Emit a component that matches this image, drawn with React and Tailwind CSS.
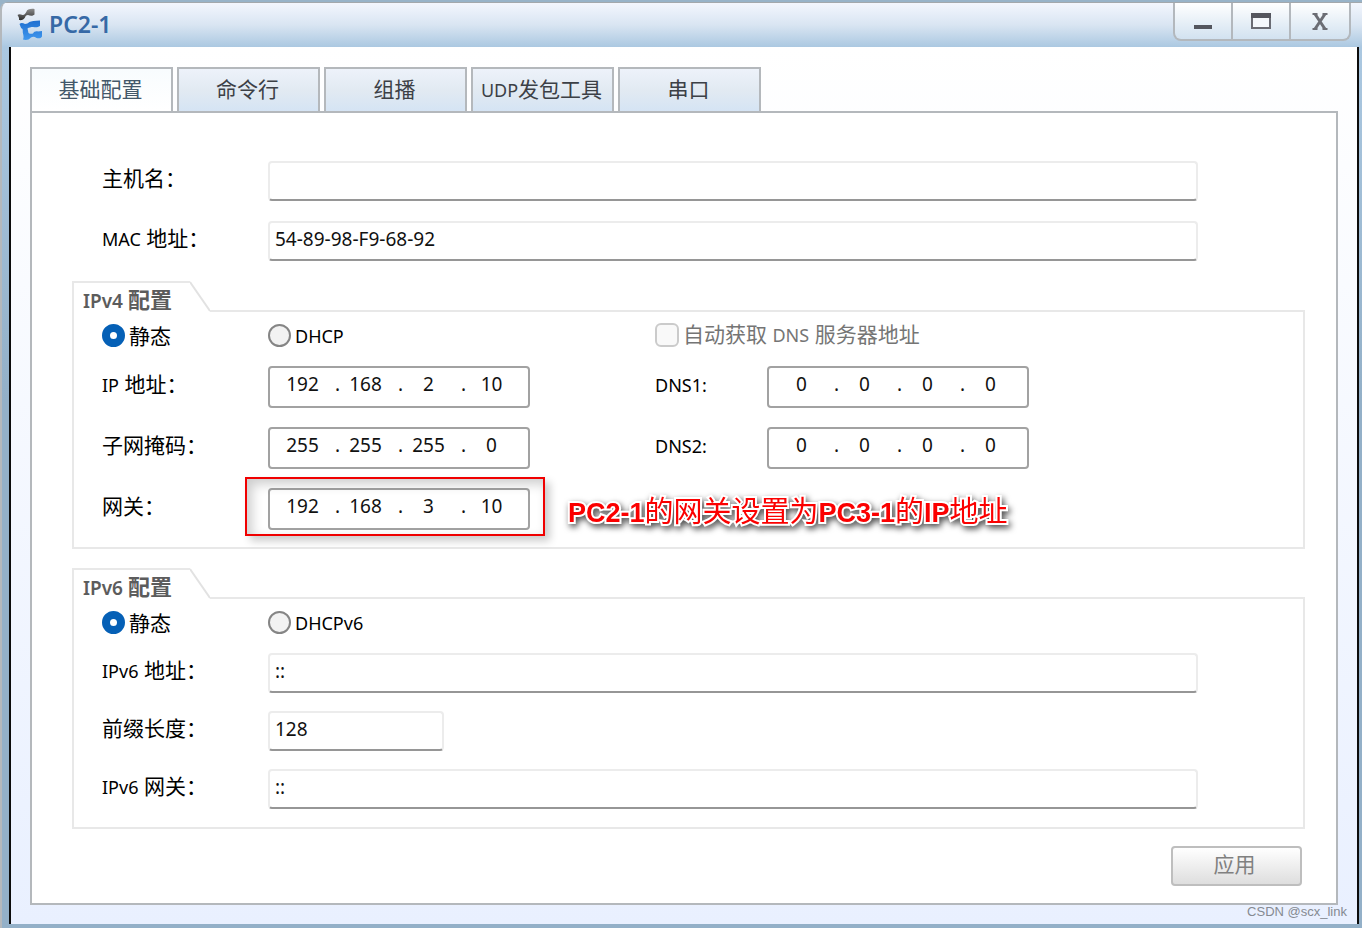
const NOTO = "font-['Noto_Sans','Noto_Sans_CJK_SC',sans-serif]";

const TABS = [
  { cjk: "基础配置" },
  { cjk: "命令行" },
  { cjk: "组播" },
  { latin: "UDP", cjk: "发包工具" },
  { cjk: "串口" },
];

function Logo() {
  return (
    <svg width="26" height="34" viewBox="0 0 26 34" aria-hidden="true">
      <defs>
        <linearGradient id="logo-dark" x1="0" y1="0" x2="0" y2="1">
          <stop offset="0" stopColor="#8b8b8b" />
          <stop offset="1" stopColor="#2e2e2e" />
        </linearGradient>
        <linearGradient id="logo-blue" x1="0" y1="0" x2="0" y2="1">
          <stop offset="0" stopColor="#1f6fd0" />
          <stop offset="1" stopColor="#3f97ee" />
        </linearGradient>
      </defs>
      <path
        d="M0.500 8C2 6.500 4 7.500 5.500 8C8 8 8.500 6 9.500 4.500C10 2.500 13 1.500 17.500 2V7.500C15 9.500 13 8.500 11 8C9 8 8.500 9 8 10.500C7 12.500 4.500 13.500 2 13C2.500 11 1.500 10 0.500 8Z"
        fill="url(#logo-dark)"
      />
      <path
        d="M2.500 17C4 15.500 6 16 8 17C10 17 11 16 12.500 15C14 14 18 14 23 13.500V19C20 21 18 20 16 20C14 20 12 20.500 10.500 21.500L11.500 26C13 27 14.500 27 16 26.500C17 24.500 19 24 21 24.500L25 24V29.500C24 31.500 21.500 31.500 19.500 31C17.500 29.500 15.500 29.500 14 30.500C12 33 8.500 33.500 6 32.500C7 30.500 6.500 28.500 6 26.500C5.500 25 6 23.500 5.500 22C3.500 21.500 3.500 19 2.500 17Z"
        fill="url(#logo-blue)"
      />
    </svg>
  );
}

function TitleBar() {
  const button =
    "flex w-[58px] items-center justify-center border-r-2 border-[#b3b8bd] last:border-r-0";
  return (
    <header className="flex h-[45px] items-start justify-between border-t border-[#a3a8ac] bg-linear-to-b from-[#f3f6fd] via-[#d9e5f2] to-[#abc8e1] pr-[11px] pl-[15px]">
      <div className="flex items-center pt-1">
        <Logo />
        <h1 className="pb-px pl-[6px] text-[23px] leading-8 font-semibold text-[#3669a6]">PC2-1</h1>
      </div>
      <div className="flex h-[38px] overflow-hidden rounded-b-lg border-2 border-t-0 border-[#b3b8bd] bg-linear-to-b from-white to-[#d2e2f0]">
        <button type="button" aria-label="最小化" className={button}>
          <svg width="18" height="20" viewBox="0 0 18 20" aria-hidden="true">
            <rect x="0" y="14" width="18" height="4" fill="#54565e" />
          </svg>
        </button>
        <button type="button" aria-label="最大化" className={button}>
          <svg width="20" height="16" viewBox="0 0 20 16" aria-hidden="true">
            <rect x="1" y="1" width="18" height="14" fill="#f4f8fc" stroke="#6a6c74" strokeWidth="2" />
            <rect x="0" y="0" width="20" height="5" fill="#54565e" />
          </svg>
        </button>
        <button type="button" aria-label="关闭" className={button}>
          <svg width="16" height="17" viewBox="0 0 16 17" fill="none" stroke="#6b6d74" aria-hidden="true">
            <path d="M3 1L13 16M13 1L3 16" strokeWidth="3" />
            <path d="M0.500 1H5.500M10.500 1H15.500M0.500 16H5.500M10.500 16H15.500" strokeWidth="2" />
          </svg>
        </button>
      </div>
    </header>
  );
}

function Tabs() {
  return (
    <div role="tablist" className="flex gap-1">
      {TABS.map((tab, i) => (
        <button
          key={tab.cjk}
          type="button"
          role="tab"
          aria-selected={i === 0}
          className={
            "h-[44px] w-[143px] border-2 border-b-0 border-[#b4b8bc] pr-[2px] text-[21px] whitespace-nowrap " +
            (i === 0
              ? "bg-linear-to-b from-[#f8fcfe] to-white text-[#43586a]"
              : "bg-linear-to-b from-[#edf2fa] via-[#e2eaf2] to-[#d5e4f4] text-[#3c4046]")
          }
        >
          {tab.latin && <span className="text-lg">{tab.latin}</span>}
          {tab.cjk}
        </button>
      ))}
    </div>
  );
}

function FieldLabel({ htmlFor, latin, cjk }) {
  return (
    <label htmlFor={htmlFor} className="pb-[6px] text-[21px] leading-7 whitespace-nowrap text-black">
      {latin && <span className="text-lg">{latin}</span>}
      {latin && cjk && " "}
      {cjk}
    </label>
  );
}

function TextField({ id, value = "", narrow = false }) {
  return (
    <input
      id={id}
      type="text"
      defaultValue={value}
      className={
        "h-10 rounded-sm border-2 border-[#ececec] border-b-[#969696] bg-white px-[5px] pb-[5px] text-[19px] text-[#111] outline-none " +
        (narrow ? "w-[176px]" : "w-full")
      }
    />
  );
}

function IpField({ id, label, parts }) {
  return (
    <div
      role="group"
      aria-label={label}
      className="flex h-[42px] w-[262px] items-center rounded-sm border-2 border-[#a2a2a2] bg-white pb-[6px] pl-[7px] text-[19px] text-[#111]"
    >
      {parts.map((part, i) => (
        <div key={i} className="flex items-center">
          <input
            id={i === 0 ? id : undefined}
            aria-label={i === 0 ? undefined : `${label} ${i + 1}`}
            type="text"
            defaultValue={part}
            className="w-[51px] bg-transparent text-center outline-none"
          />
          {i < 3 && <span className="w-3 text-right">.</span>}
        </div>
      ))}
    </div>
  );
}

function RadioOption({ name, checked = false, latin, cjk }) {
  return (
    <label className="flex items-center gap-1 pb-px text-[21px] leading-7 text-black">
      <input
        type="radio"
        name={name}
        defaultChecked={checked}
        className="size-[23px] appearance-none rounded-full border-2 border-[#858585] bg-[#f2f2f2] checked:border-8 checked:border-[#0560b6] checked:bg-white"
      />
      {latin ? <span className="text-lg">{latin}</span> : cjk}
    </label>
  );
}

function ConfigGroup({ id, latin, children }) {
  return (
    <section aria-labelledby={id}>
      <div className="flex h-[31px]">
        <h2
          id={id}
          className="w-[118px] border-t-2 border-l-2 border-[#e8e8e8] pt-[2px] pl-[9px] text-[22px] leading-7 font-bold whitespace-nowrap text-[#5c5c5c]"
        >
          <span className="text-[19px] font-semibold">{latin} </span>配置
        </h2>
        <svg width="20" height="31" viewBox="0 0 20 31" fill="none" aria-hidden="true">
          <path d="M0 1L20 30" stroke="#e2e2e2" strokeWidth="2" />
        </svg>
        <div className="flex-1 border-b-2 border-[#e8e8e8]" />
      </div>
      <div className="border-2 border-t-0 border-[#e8e8e8] pl-7">{children}</div>
    </section>
  );
}

function Annotation() {
  return (
    <>
      <div className="pointer-events-none absolute -top-[11px] -left-[23px] h-[59px] w-[300px] border-2 border-[#f00000] shadow-[5px_5px_8px_rgba(0,0,0,0.2),inset_5px_5px_12px_rgba(0,0,0,0.2)]" />
      <p className="absolute top-1 left-[300px] font-['Liberation_Sans','Noto_Sans_CJK_SC',sans-serif] text-[29px] leading-10 whitespace-nowrap text-[#fb0000] drop-shadow-[2px_3px_3px_rgba(0,0,0,0.7)] [-webkit-text-stroke:4px_white] [paint-order:stroke_fill]">
        <span className="text-[27px] font-bold">PC2-1</span>的网关设置为
        <span className="text-[27px] font-bold">PC3-1</span>的
        <span className="text-[27px] font-bold">IP</span>地址
      </p>
    </>
  );
}

export default function App() {
  return (
    <div className={"flex min-h-screen flex-col bg-[#98b3c8] pt-[2px] " + NOTO}>
      <div className="flex flex-1 flex-col overflow-hidden rounded-tl-lg border-l-2 border-[#b4b8bc]">
        <TitleBar />
        <div className="flex flex-1 flex-col bg-linear-to-b from-[#abc8e1] to-[#93b0c8] to-40% pr-[3px] pb-1 pl-[7px]">
          <main className="relative flex flex-1 flex-col border-x-2 border-[#0c0c0c] bg-linear-to-b from-white to-[#e9f0ff] px-[19px] pt-5 pb-[19px]">
            <Tabs />
            <form
              className="flex flex-1 flex-col border-2 border-[#b4b8bc] bg-white pt-12 pr-[31px] pb-[17px] pl-10"
              onSubmit={(e) => e.preventDefault()}
            >
              <div className="grid grid-cols-[166px_1fr] items-center gap-y-5 pr-[107px] pb-5 pl-[30px]">
                <FieldLabel htmlFor="host" cjk="主机名：" />
                <TextField id="host" />
                <FieldLabel htmlFor="mac" latin="MAC" cjk="地址：" />
                <TextField id="mac" value="54-89-98-F9-68-92" />
              </div>

              <ConfigGroup id="ipv4" latin="IPv4">
                <div className="grid grid-cols-[166px_387px_1fr] items-center">
                  <RadioOption name="v4" checked cjk="静态" />
                  <RadioOption name="v4" latin="DHCP" />
                  <label className="flex h-12 items-center gap-1 pb-[3px] text-[21px] leading-7 text-[#757575]">
                    <input
                      type="checkbox"
                      disabled
                      className="size-6 appearance-none rounded-md border-2 border-[#cbcbcb] bg-[#f9f9f9]"
                    />
                    <span>
                      自动获取 <span className="text-lg">DNS</span> 服务器地址
                    </span>
                  </label>
                </div>
                <div className="grid grid-cols-[166px_387px_112px_1fr] items-center gap-y-[19px] pt-[6px] pb-[17px]">
                  <FieldLabel htmlFor="ip" latin="IP" cjk="地址：" />
                  <IpField id="ip" label="IP 地址" parts={["192", "168", "2", "10"]} />
                  <FieldLabel htmlFor="dns1" latin="DNS1:" />
                  <IpField id="dns1" label="DNS1" parts={["0", "0", "0", "0"]} />

                  <FieldLabel htmlFor="mask" cjk="子网掩码：" />
                  <IpField id="mask" label="子网掩码" parts={["255", "255", "255", "0"]} />
                  <FieldLabel htmlFor="dns2" latin="DNS2:" />
                  <IpField id="dns2" label="DNS2" parts={["0", "0", "0", "0"]} />

                  <FieldLabel htmlFor="gateway" cjk="网关：" />
                  <div className="relative">
                    <IpField id="gateway" label="网关" parts={["192", "168", "3", "10"]} />
                    <Annotation />
                  </div>
                </div>
              </ConfigGroup>

              <div className="pt-[19px]">
                <ConfigGroup id="ipv6" latin="IPv6">
                  <div className="grid h-12 grid-cols-[166px_1fr] items-center">
                    <RadioOption name="v6" checked cjk="静态" />
                    <RadioOption name="v6" latin="DHCPv6" />
                  </div>
                  <div className="grid grid-cols-[166px_1fr] items-center gap-y-[18px] pt-[6px] pr-[105px] pb-[18px]">
                    <FieldLabel htmlFor="v6addr" latin="IPv6" cjk="地址：" />
                    <TextField id="v6addr" value="::" />
                    <FieldLabel htmlFor="prefix" cjk="前缀长度：" />
                    <TextField id="prefix" value="128" narrow />
                    <FieldLabel htmlFor="v6gw" latin="IPv6" cjk="网关：" />
                    <TextField id="v6gw" value="::" />
                  </div>
                </ConfigGroup>
              </div>

              <div className="flex justify-end pt-[17px] pr-[3px]">
                <button
                  type="submit"
                  className="h-10 w-[131px] rounded-sm border-2 border-[#bebebe] bg-linear-to-b from-white to-[#dedede] pr-1 pb-1 text-[21px] leading-7 text-[#808080]"
                >
                  应用
                </button>
              </div>
            </form>
            <p className="absolute right-[10px] bottom-0 font-['Liberation_Sans',sans-serif] text-[13px] leading-6 text-[#858a92]">
              CSDN @scx_link
            </p>
          </main>
        </div>
      </div>
    </div>
  );
}
